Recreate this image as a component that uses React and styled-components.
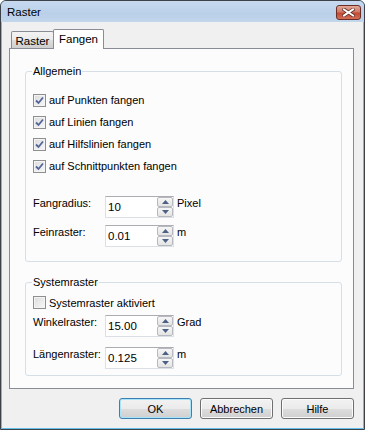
import styled, { createGlobalStyle } from 'styled-components';

const GlobalStyle = createGlobalStyle`
  html, body {
    margin: 0;
    padding: 0;
    background: #ffffff;
  }
  body {
    font-family: "Liberation Sans", Arial, sans-serif;
    font-size: 11px;
    color: #000;
  }
`;

const Window = styled.div`
  width: 365px;
  height: 430px;
  box-sizing: border-box;
  border: 1px solid #3e4147;
  border-radius: 6px 6px 0 0;
  background: #62c0ea;
  display: flex;
  flex-direction: column;
  overflow: hidden;
`;

const TitleBar = styled.div`
  height: 21px;
  flex: none;
  display: flex;
  align-items: center;
  justify-content: space-between;
  padding: 0 3px 0 6px;
  background: linear-gradient(#c6d9ef, #bad0e9 60%, #c2d6ec);
`;

const Title = styled.span`
  font-size: 11.5px;
  margin-top: 1px;
`;

const CloseButton = styled.div`
  width: 25px;
  height: 15px;
  box-sizing: border-box;
  margin-top: 1px;
  border: 1px solid #6b2d24;
  border-radius: 3px;
  background: linear-gradient(#e3a898, #d07a66 45%, #c34a33 55%, #d27059);
  display: flex;
  align-items: center;
  justify-content: center;
`;

const Body = styled.div`
  flex: 1;
  margin: 0 1px 1px;
  background: #f0f0f0;
  display: flex;
  flex-direction: column;
  padding: 7px 9px 0 7px;
`;

const TabStrip = styled.div`
  position: relative;
  z-index: 1;
  height: 20px;
  display: flex;
  align-items: flex-end;
  padding-left: 2px;
`;

const Tab = styled.div`
  box-sizing: border-box;
  border: 1px solid #898c95;
  border-bottom: none;
  border-radius: 2px 2px 0 0;
  display: flex;
  justify-content: center;
  padding-top: 3px;
  height: ${(p) => (p.$active ? '20px' : '17px')};
  width: ${(p) => (p.$active ? '51px' : '43px')};
  margin-bottom: ${(p) => (p.$active ? '0' : '1px')};
  margin-left: ${(p) => (p.$active ? '-1px' : '0')};
  background: ${(p) =>
    p.$active ? '#ffffff' : 'linear-gradient(#f3f3f3, #ebebeb 50%, #dddddd 51%, #cfcfcf)'};
  font-size: 11.5px;
`;

const Panel = styled.div`
  margin-top: -1px;
  height: 341px;
  box-sizing: border-box;
  border: 1px solid #898c95;
  background: #fcfcfc;
  padding: 22px 11px 0 15px;
  display: flex;
  flex-direction: column;
`;

const Group = styled.div`
  position: relative;
  border: 1px solid #d5dfe5;
  border-radius: 3px;
  padding: ${(p) => p.$pad};
  margin-bottom: ${(p) => p.$gap || '0'};
  display: flex;
  flex-direction: column;
`;

const Legend = styled.span`
  position: absolute;
  top: -8px;
  left: 6px;
  padding: 0 1px;
  background: #fcfcfc;
  line-height: 14px;
`;

const CheckRow = styled.label`
  height: ${(p) => p.$h || '22px'};
  display: flex;
  align-items: center;
  gap: 3px;
`;

const Box = styled.span`
  width: 13px;
  height: 13px;
  box-sizing: border-box;
  border: 1px solid #8e8f8f;
  background: linear-gradient(135deg, #dcdcdc, #f8f8f8);
  box-shadow: inset 0 0 0 1px #f4f4f4;
  display: flex;
  align-items: center;
  justify-content: center;
`;

const FieldRow = styled.div`
  display: flex;
  align-items: flex-start;
  margin-top: ${(p) => p.$top || '0'};
`;

const FieldLabel = styled.span`
  width: 72px;
  line-height: 14px;
`;

const SpinBox = styled.div`
  width: 69px;
  height: 22px;
  box-sizing: border-box;
  border: 1px solid #dbdfe6;
  border-top-color: #abadb3;
  background: #fff;
  display: flex;
`;

const SpinText = styled.span`
  flex: 1;
  padding-left: 2px;
  font-size: 11.5px;
  line-height: 21px;
`;

const SpinButtons = styled.div`
  width: 16px;
  display: flex;
  flex-direction: column;
`;

const SpinButton = styled.div`
  flex: 1;
  box-sizing: border-box;
  border: 1px solid #b6b9bf;
  border-radius: 2px;
  background: linear-gradient(#f6f6f6, #e4e4e4);
  display: flex;
  align-items: center;
  justify-content: center;
`;

const Unit = styled.span`
  margin-left: 3px;
  line-height: 14px;
`;

const ButtonRow = styled.div`
  display: flex;
  justify-content: flex-end;
  gap: 8px;
  margin-top: 9px;
`;

const Button = styled.div`
  width: 73px;
  height: 21px;
  box-sizing: border-box;
  border: 1px solid ${(p) => (p.$default ? '#3c7fb1' : '#707070')};
  border-radius: 3px;
  background: linear-gradient(#f2f2f2, #ebebeb 50%, #dddddd 51%, #cfcfcf);
  box-shadow: inset 0 0 0 1px ${(p) => (p.$default ? '#a8e3fa' : '#fbfbfb')};
  display: flex;
  align-items: center;
  justify-content: center;
  font-size: 11px;
`;

const Check = () => (
  <svg width="9" height="9" viewBox="0 0 9 9">
    <path d="M1 4.5 L3.5 7 L8 1.5" fill="none" stroke="#52669a" strokeWidth="1.8" />
  </svg>
);

const Arrow = ({ up }) => (
  <svg width="7" height="4" viewBox="0 0 7 4">
    <path d={up ? 'M0 4 L3.5 0 L7 4 Z' : 'M0 0 L3.5 4 L7 0 Z'} fill="#4d6185" />
  </svg>
);

const CheckItem = ({ checked, h, children }) => (
  <CheckRow $h={h}>
    <Box>{checked && <Check />}</Box>
    {children}
  </CheckRow>
);

const Spin = ({ label, value, unit, top }) => (
  <FieldRow $top={top}>
    <FieldLabel>{label}</FieldLabel>
    <SpinBox>
      <SpinText>{value}</SpinText>
      <SpinButtons>
        <SpinButton><Arrow up /></SpinButton>
        <SpinButton><Arrow /></SpinButton>
      </SpinButtons>
    </SpinBox>
    <Unit>{unit}</Unit>
  </FieldRow>
);

export default function App() {
  return (
    <>
      <GlobalStyle />
      <Window>
        <TitleBar>
          <Title>Raster</Title>
          <CloseButton>
            <svg width="13" height="9" viewBox="0 0 13 9">
              <path d="M2 1.5 L11 7.5 M11 1.5 L2 7.5" stroke="#5b2a22" strokeWidth="3.4" strokeLinecap="square" />
              <path d="M2 1.5 L11 7.5 M11 1.5 L2 7.5" stroke="#ffffff" strokeWidth="2" strokeLinecap="square" />
            </svg>
          </CloseButton>
        </TitleBar>
        <Body>
          <TabStrip>
            <Tab>Raster</Tab>
            <Tab $active>Fangen</Tab>
          </TabStrip>
          <Panel>
            <Group $pad="17px 0 14px 7px" $gap="20px">
              <Legend>Allgemein</Legend>
              <CheckItem checked>auf Punkten fangen</CheckItem>
              <CheckItem checked>auf Linien fangen</CheckItem>
              <CheckItem checked>auf Hilfslinien fangen</CheckItem>
              <CheckItem checked>auf Schnittpunkten fangen</CheckItem>
              <Spin label="Fangradius:" value="10" unit="Pixel" top="19px" />
              <Spin label="Feinraster:" value="0.01" unit="m" top="7px" />
            </Group>
            <Group $pad="9px 0 6px 7px">
              <Legend>Systemraster</Legend>
              <CheckItem h="21px">Systemraster aktiviert</CheckItem>
              <Spin label="Winkelraster:" value="15.00" unit="Grad" top="2px" />
              <Spin label="Längenraster:" value="0.125" unit="m" top="10px" />
            </Group>
          </Panel>
          <ButtonRow>
            <Button $default>OK</Button>
            <Button>Abbrechen</Button>
            <Button>Hilfe</Button>
          </ButtonRow>
        </Body>
      </Window>
    </>
  );
}
